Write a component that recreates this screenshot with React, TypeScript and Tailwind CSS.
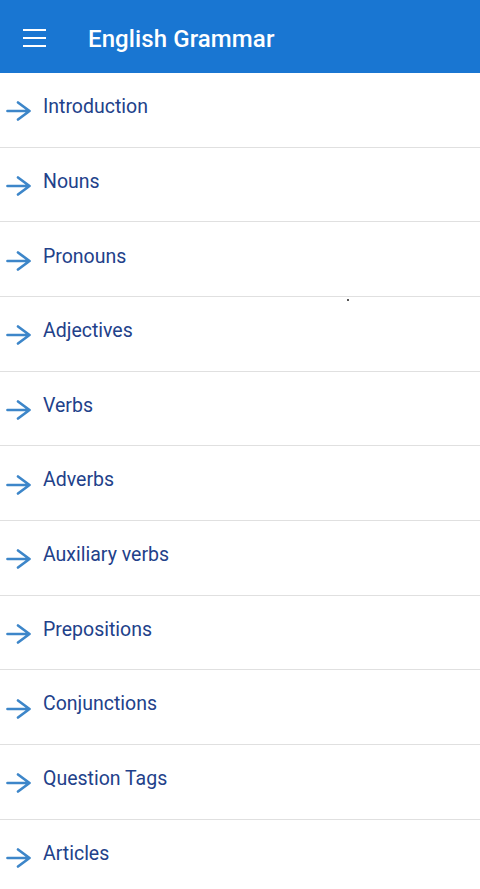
const topics = [
  "Introduction",
  "Nouns",
  "Pronouns",
  "Adjectives",
  "Verbs",
  "Adverbs",
  "Auxiliary verbs",
  "Prepositions",
  "Conjunctions",
  "Question Tags",
  "Articles",
];

function ArrowIcon() {
  return (
    <svg width="26" height="24" viewBox="0 0 26 24" fill="none" className="shrink-0">
      <path
        d="M1.5 12h22M12 3.5l11.5 8.5-11.5 8.5"
        stroke="#3d86c9"
        strokeWidth="2.7"
        strokeLinecap="round"
        strokeLinejoin="round"
      />
    </svg>
  );
}

export default function App() {
  return (
    <div className="w-[480px] h-[889px] overflow-hidden bg-white font-['Roboto',sans-serif] relative">
      {/* HEADER */}
      <header className="h-[73px] bg-[#1976d2] flex items-center">
        <div className="ml-[23px] mt-[3px] flex flex-col gap-[5.5px]">
          <span className="block w-[23px] h-[2.5px] bg-white" />
          <span className="block w-[23px] h-[2.5px] bg-white" />
          <span className="block w-[23px] h-[2.5px] bg-white" />
        </div>
        <h1 className="ml-[42px] mt-[5px] text-[24px] font-medium text-white tracking-[0.1px]">
          English Grammar
        </h1>
      </header>

      {/* LIST */}
      <ul>
        {topics.map((topic) => (
          <li
            key={topic}
            className="h-[74.67px] border-b border-[#e0e0e0] flex items-center pl-[6px]"
          >
            <div className="mt-[3px]">
              <ArrowIcon />
            </div>
            <span className="ml-[11px] -mt-[6px] text-[19.5px] text-[#22418a]">
              {topic}
            </span>
          </li>
        ))}
      </ul>

      <div className="absolute left-[347px] top-[299px] w-[2px] h-[2px] bg-[#555]" />
    </div>
  );
}
